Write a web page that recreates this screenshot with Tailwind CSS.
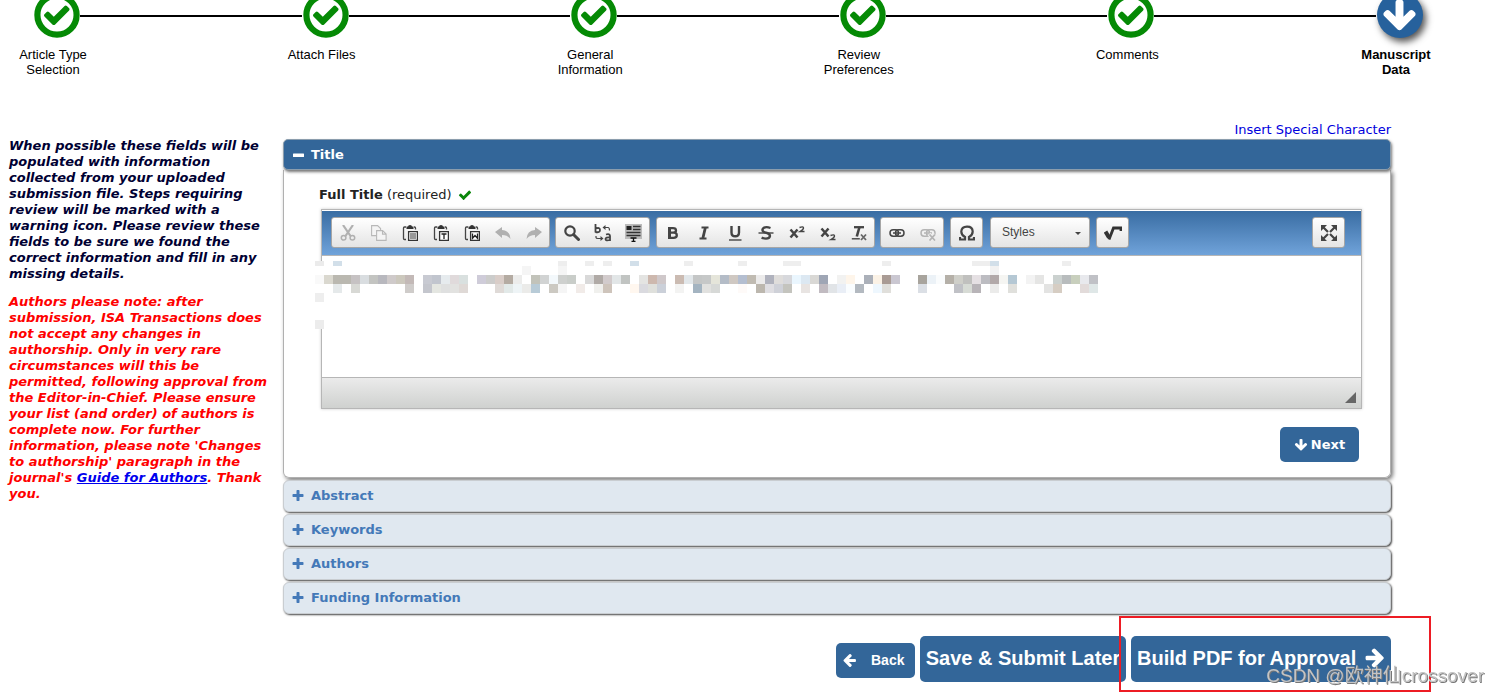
<!DOCTYPE html>
<html lang="en">
<head>
<meta charset="utf-8">
<title>Manuscript Data</title>
<script src="https://cdn.jsdelivr.net/npm/@tailwindcss/browser@4"></script>
</head>
<body class="bg-white text-black flow-root min-h-screen font-['Verdana','DejaVu_Sans',sans-serif] text-[13px] leading-4">
<svg class="hidden" aria-hidden="true">
  <symbol id="check" viewBox="0 0 1792 1792"><path d="M1671 566q0 40-28 68l-724 724-136 136q-28 28-68 28t-68-28l-136-136-362-362q-28-28-28-68t28-68l136-136q28-28 68-28t68 28l294 295 656-657q28-28 68-28t68 28l136 136q28 28 28 68z"/></symbol>
  <symbol id="plus" viewBox="0 0 1792 1792"><path d="M1600 736v192q0 40-28 68t-68 28h-416v416q0 40-28 68t-68 28h-192q-40 0-68-28t-28-68v-416h-416q-40 0-68-28t-28-68v-192q0-40 28-68t68-28h416v-416q0-40 28-68t68-28h192q40 0 68 28t28 68v416h416q40 0 68 28t28 68z"/></symbol>
  <symbol id="arrow" viewBox="0 0 1792 1792"><path d="M1675 832q0 53-37 90l-651 652q-39 37-91 37-53 0-90-37l-651-652q-38-36-38-90 0-53 38-91l74-75q39-37 91-37 53 0 90 37l294 294v-704q0-52 38-90t90-38h128q52 0 90 38t38 90v704l294-294q37-37 90-37 52 0 91 37l75 75q37 39 37 91z"/></symbol>
  <symbol id="done" viewBox="0 0 46 46"><circle cx="23" cy="23" r="19.6" fill="#fff" stroke="#058a05" stroke-width="6.2"/><path transform="translate(8 8) scale(.0165)" fill="#058a05" d="M1671 566q0 40-28 68l-724 724-136 136q-28 28-68 28t-68-28l-136-136-362-362q-28-28-28-68t28-68l136-136q28-28 68-28t68 28l294 295 656-657q28-28 68-28t68 28l136 136q28 28 28 68z"/></symbol>
  <symbol id="clip" viewBox="0 0 16 16"><path d="M4 2H2.5Q1.5 2 1.5 3v10.500q0 1 1 1H4M12 2h.5q1 0 1 1v1.500" fill="none" stroke="#444" stroke-width="1.300"/><path d="M4.500 1.500h1.500Q6 0 8 0t2 1.500h1.500V4h-7z" fill="#333"/><path d="M6.600 6.600h8.800v8.800H6.600z" fill="#fff" stroke="#333" stroke-width="1.300"/></symbol>
  <symbol id="undo" viewBox="0 0 16 16"><path d="M0 7l7-5v3q8 .5 8.500 9-3-4-8.500-4v3z" fill="#b0b0b0"/></symbol>
  <symbol id="link" viewBox="0 0 16 16"><rect x="1" y="4.800" width="8.500" height="6.400" rx="3.200" fill="none" stroke="currentColor" stroke-width="1.500"/><rect x="6.500" y="4.800" width="8.500" height="6.400" rx="3.200" fill="none" stroke="currentColor" stroke-width="1.500"/><path d="M4 8h8" stroke="currentColor" stroke-width="1.500"/></symbol>
</svg>

<ol class="flex -mt-2 pl-[34px] pr-[76px] text-center font-['Liberation_Sans',Arial,sans-serif] leading-[15px]">
  <li class="flex-1"><div class="flex items-center"><svg class="size-[46px]"><use href="#done"/></svg><span class="h-[2px] flex-1 bg-black mr-px mt-[2px]"></span></div><p class="w-24 -ml-[29px] mt-[9px]">Article Type<br>Selection</p></li>
  <li class="flex-1"><div class="flex items-center"><svg class="size-[46px]"><use href="#done"/></svg><span class="h-[2px] flex-1 bg-black mr-px mt-[2px]"></span></div><p class="w-24 -ml-[29px] mt-[9px]">Attach Files</p></li>
  <li class="flex-1"><div class="flex items-center"><svg class="size-[46px]"><use href="#done"/></svg><span class="h-[2px] flex-1 bg-black mr-px mt-[2px]"></span></div><p class="w-24 -ml-[29px] mt-[9px]">General<br>Information</p></li>
  <li class="flex-1"><div class="flex items-center"><svg class="size-[46px]"><use href="#done"/></svg><span class="h-[2px] flex-1 bg-black mr-px mt-[2px]"></span></div><p class="w-24 -ml-[29px] mt-[9px]">Review<br>Preferences</p></li>
  <li class="flex-1"><div class="flex items-center"><svg class="size-[46px]"><use href="#done"/></svg><span class="h-[2px] flex-1 bg-black mr-px mt-[2px]"></span></div><p class="w-24 -ml-[29px] mt-[9px]">Comments</p></li>
  <li class="w-[46px]" aria-current="step"><div class="size-[46px] rounded-full bg-[#26619c] shadow-[3px_4px_7px_#555] flex items-center justify-center"><svg class="size-[37px] fill-white"><use href="#arrow"/></svg></div><p class="w-24 -ml-[29px] mt-[9px] font-bold">Manuscript<br>Data</p></li>
</ol>

<div class="flex mt-[45px]">
  <aside class="w-[283px] shrink-0 pl-[9px] pt-4 font-bold italic whitespace-nowrap">
    <p class="text-[#000033]">When possible these fields will be<br>populated with information<br>collected from your uploaded<br>submission file. Steps requiring<br>review will be marked with a<br>warning icon. Please review these<br>fields to be sure we found the<br>correct information and fill in any<br>missing details.</p>
    <p class="mt-3 text-[#ff0000]">Authors please note: after<br>submission, ISA Transactions does<br>not accept any changes in<br>authorship. Only in very rare<br>circumstances will this be<br>permitted, following approval from<br>the Editor-in-Chief. Please ensure<br>your list (and order) of authors is<br>complete now. For further<br>information, please note 'Changes<br>to authorship' paragraph in the<br>journal's <a href="#guide" class="text-[#0000ee] underline">Guide for Authors</a>. Thank<br>you.</p>
  </aside>

  <main class="flex-1 min-w-0 mr-[108px]">
    <div class="flex justify-end mb-px"><a href="#special" class="text-[#0000dd]">Insert Special Character</a></div>

    <section>
      <h2 class="relative"><button class="w-full h-[31px] flex items-center gap-[6px] pl-[9px] rounded-[5px] border border-[#8b9dad] bg-[#336699] text-white font-bold shadow-[1px_2px_3px_#777]"><svg class="w-3 h-3" viewBox="0 0 12 12"><rect y="4.500" width="11" height="3.500" rx="0.500" fill="#fff"/></svg>Title</button></h2>
      <div class="border border-[#b0b0b0] border-t-0 rounded-b-[6px] shadow-[2px_2px_4px_#777] pt-[17px] pb-[15px] pl-[35px] pr-7 text-[#222]">
        <div class="flex items-center gap-[6px]"><label for="full-title"><b>Full Title</b> (required)</label><svg class="size-[14px] fill-[#0a860a]"><use href="#check"/></svg></div>

        <div class="ml-[2px] mt-[6px] border border-[#b6b6b6] shadow-[0_0_3px_#0003] bg-white font-['Liberation_Sans',Arial,sans-serif]">
          <div class="mt-px flex items-start gap-x-[5px] h-[45px] pt-[6px] pl-[9px] pr-4 border-b border-[#b6b6b6] bg-linear-to-b from-[#396da3] to-[#70a3da]">
            <div class="flex h-[31px] rounded-[3px] border border-[#a6a6a6] bg-linear-to-b from-white to-[#e4e4e4]">
              <button aria-label="Cut" class="w-[31px] flex items-center justify-center"><svg class="size-4" viewBox="0 0 16 16" fill="none" stroke="#b0b0b0" stroke-width="1.500"><path d="M3 0l7.500 11M13 0L5.500 11" stroke-width="2.200"/><circle cx="3.600" cy="12.800" r="2.300"/><circle cx="12.400" cy="12.800" r="2.300"/></svg></button>
              <button aria-label="Copy" class="w-[31px] flex items-center justify-center"><svg class="size-4" viewBox="0 0 16 16" fill="#f4f4f4" stroke="#b8b8b8" stroke-width="1.100"><path d="M.6.600h6l3 3v7h-9z"/><path d="M5.600 5.600h6l3.500 3.500v6.300H5.600z"/><path d="M11.500 5.600v3.500H15" fill="none"/></svg></button>
              <button aria-label="Paste" class="w-[31px] flex items-center justify-center"><svg class="size-4" viewBox="0 0 16 16"><use href="#clip"/><path d="M8 9h6M8 11h6M8 13h6" stroke="#333"/></svg></button>
              <button aria-label="Paste as plain text" class="w-[31px] flex items-center justify-center"><svg class="size-4" viewBox="0 0 16 16"><use href="#clip"/><path d="M8.500 9h5M11 9v5" stroke="#222" stroke-width="1.300"/></svg></button>
              <button aria-label="Paste from Word" class="w-[31px] flex items-center justify-center"><svg class="size-4" viewBox="0 0 16 16"><use href="#clip"/><path d="M8.500 8.500v4.800L11 10.500l2.500 2.800V8.500" fill="none" stroke="#222" stroke-width="1.300"/></svg></button>
              <button aria-label="Undo" class="w-[31px] flex items-center justify-center"><svg class="size-4"><use href="#undo"/></svg></button>
              <button aria-label="Redo" class="w-[31px] flex items-center justify-center"><svg class="size-4 -scale-x-100"><use href="#undo"/></svg></button>
            </div>
            <div class="flex h-[31px] rounded-[3px] border border-[#a6a6a6] bg-linear-to-b from-white to-[#e4e4e4]">
              <button aria-label="Find" class="w-[31px] flex items-center justify-center"><svg class="size-4" viewBox="0 0 16 16" fill="none" stroke="#444"><circle cx="6" cy="6" r="4.700" stroke-width="2.200"/><path d="M9.500 9.500l5 5" stroke-width="3" stroke-linecap="round"/></svg></button>
              <button aria-label="Replace" class="w-[31px] flex items-center justify-center"><svg class="w-[18px] h-[18px]" viewBox="0 0 18 18" fill="none" stroke="#444" stroke-width="1.800"><path d="M1.500 0v8.500M1.500 4.500Q6 3 6 6T1.500 8M12 10.500q4-1 4 1.500v5M16 13.500q-4.500-.5-4.500 1.600T16 16"/><path d="M10 3.500h4q1.500 0 1.500 3M2 12v1.500q0 1 2 1h3" stroke-width="1.200"/><path d="M11.500 1L8.500 3.500l3 2.500zM6.500 12l3 2.500-3 2.500z" fill="#444" stroke="none"/></svg></button>
              <button aria-label="Select all" class="w-[31px] flex items-center justify-center"><svg class="w-[17px] h-[18px]" viewBox="0 0 17 18"><path d="M0 0h17v15H0z" fill="#bbb"/><path d="M1.500 2h5v4h-5z" fill="#222"/><path d="M8 2.500h7.500M8 5.500h7.500M1.500 8.500h14M1.500 11.500h14" stroke="#333" stroke-width="1.400"/><path d="M5.500 14h6M8.500 14v3.500M6.500 17.500h4" stroke="#111" stroke-width="1.300"/></svg></button>
            </div>
            <div class="flex h-[31px] ml-px rounded-[3px] border border-[#a6a6a6] bg-linear-to-b from-white to-[#e4e4e4]">
              <button aria-label="Bold" class="w-[31px] flex items-center justify-center"><svg class="size-4" viewBox="0 0 16 16" fill="none" stroke="#444"><path d="M4.500 3.200H8q3 0 3 2.200t-3 2.200H4.500zM4.500 7.600H8.500q3.300 0 3.300 2.600t-3.300 2.600h-4z" stroke-width="2.300"/><path d="M4.500 2v12" stroke-width="3"/></svg></button>
              <button aria-label="Italic" class="w-[31px] flex items-center justify-center"><svg class="size-4" viewBox="0 0 16 16" fill="none" stroke="#444"><path d="M5.500 2.500h7M3.500 13.500h7" stroke-width="1.900"/><path d="M9.400 2.500L6.800 13.500" stroke-width="2.800"/></svg></button>
              <button aria-label="Underline" class="w-[31px] flex items-center justify-center"><svg class="size-4" viewBox="0 0 16 16" fill="none" stroke="#444"><path d="M4.500 1v6.500q0 3.800 3.700 3.800T12 7.500V1" stroke-width="2.400"/><path d="M2 15h12.500" stroke-width="1.400"/></svg></button>
              <button aria-label="Strikethrough" class="w-[31px] flex items-center justify-center"><svg class="size-4" viewBox="0 0 16 16" fill="none" stroke="#444"><path d="M12.500 3Q8.500 1.500 6 2.700 3.600 4.200 5 6.400 6 7.300 9 8q3.200 1 2.900 3.300-.5 2.300-3.900 2.300-2.200 0-4.400-1" stroke-width="2.400"/><path d="M.5 8h15" stroke-width="1.400"/></svg></button>
              <button aria-label="Superscript" class="w-[31px] flex items-center justify-center"><svg class="size-4" viewBox="0 0 16 16" fill="none" stroke="#444"><path d="M1.500 4.500l7 8M8.500 4.500l-7 8" stroke-width="2.500"/><path d="M10.500 2.500q4-1.500 4 .5 0 1.500-3.500 3.500h4.500" stroke-width="1.400"/></svg></button>
              <button aria-label="Subscript" class="w-[31px] flex items-center justify-center"><svg class="size-4" viewBox="0 0 16 16" fill="none" stroke="#444"><path d="M1.500 3.500l7 8M8.500 3.500l-7 8" stroke-width="2.500"/><path d="M10.500 10.500q4-1.500 4 .5 0 1.500-3.500 3.500h4.500" stroke-width="1.400"/></svg></button>
              <button aria-label="Remove format" class="w-[31px] flex items-center justify-center"><svg class="size-4" viewBox="0 0 16 16" fill="none" stroke="#444"><path d="M3 2.200h10" stroke-width="2.300"/><path d="M8.500 2L5.800 11.500" stroke-width="2.600"/><path d="M.8 13.800h8" stroke-width="1.400"/><path d="M10 9.500l5 5.500M15 9.500L10 15" stroke="#666" stroke-width="1.800"/></svg></button>
            </div>
            <div class="flex h-[31px] rounded-[3px] border border-[#a6a6a6] bg-linear-to-b from-white to-[#e4e4e4]">
              <button aria-label="Link" class="w-[31px] flex items-center justify-center text-[#444]"><svg class="size-4"><use href="#link"/></svg></button>
              <button aria-label="Unlink" class="w-[31px] flex items-center justify-center text-[#b4b4b4]"><svg class="size-4" viewBox="0 0 16 16"><use href="#link"/><path d="M9 9l6 6.500M15 9L9 15.500" stroke="#eee" stroke-width="4"/><path d="M9.500 9.500l5.500 6M15 9.500l-5.500 6" stroke="currentColor" stroke-width="1.800"/></svg></button>
            </div>
            <button aria-label="Insert special symbol" class="w-[33px] h-[31px] ml-px flex items-center justify-center rounded-[3px] border border-[#a6a6a6] bg-linear-to-b from-white to-[#e4e4e4]"><svg class="size-4" viewBox="0 0 16 16" fill="none" stroke="#444" stroke-width="2.200"><path d="M1 12v2.500h5V12Q2.300 10 2.300 6.500 2.500 1.700 8 1.600t5.700 4.900Q13.700 10 10 12v2.500h5V12"/></svg></button>
            <div class="relative w-[100px] h-[31px] ml-[2px] rounded-[3px] border border-[#a6a6a6] bg-linear-to-b from-white to-[#e4e4e4]">
              <select aria-label="Styles" class="appearance-none block w-full h-full pl-[11px] pb-[2px] text-xs text-[#444] font-['Liberation_Sans',Arial,sans-serif]"><option>Styles</option></select>
              <svg class="absolute right-2 top-[14px] w-[6px] h-[3px] pointer-events-none" viewBox="0 0 6 3"><path d="M0 0h6L3 3z" fill="#444"/></svg>
            </div>
            <button aria-label="Math equation" class="w-[33px] h-[31px] ml-px flex items-center justify-center rounded-[3px] border border-[#a6a6a6] bg-linear-to-b from-white to-[#e4e4e4]"><svg class="w-[18px] h-[18px]" viewBox="0 0 18 18" fill="none" stroke="#333"><path d="M1.500 7.500L5 13.500" stroke-width="4"/><path d="M5 15.500L9.500 4H17v3" stroke-width="2.800"/></svg></button>
            <button aria-label="Maximize" class="ml-auto w-[33px] h-[31px] flex items-center justify-center rounded-[3px] border border-[#a6a6a6] bg-linear-to-b from-white to-[#e4e4e4]"><svg class="size-4" viewBox="0 0 16 16" fill="#444" stroke="#444"><path d="M0 0h6L0 6zM16 0v6l-6-6zM0 16v-6l6 6zM16 16h-6l6-6z" stroke="none"/><path d="M2 2l5 5M14 2L9 7M2 14l5-5M14 14L9 9" stroke-width="2.200"/></svg></button>
          </div>
          <div class="relative">
            <textarea id="full-title" class="block w-full h-[121px] resize-none outline-none p-5"></textarea>
            <svg id="mosaic" class="absolute -left-[7px] top-[5px] w-[783px] h-[68px] pointer-events-none" viewBox="0 0 783 68" shape-rendering="crispEdges"><rect width="20" height="69" fill="#fff"/></svg>
          </div>
          <div class="h-[31px] flex items-end justify-end pr-[5px] pb-[5px] border-t border-[#b6b6b6] bg-linear-to-b from-[#ebebeb] to-[#cfd1cf]"><svg class="size-[11px]" viewBox="0 0 11 11"><path d="M11 0v11H0z" fill="#666"/></svg></div>
        </div>

        <div class="flex justify-end mt-[18px] mr-[3px]"><button class="w-[79px] h-[35px] flex items-center justify-center gap-[3px] rounded-[5px] bg-[#336699] text-white font-bold"><svg class="size-[14px] fill-white"><use href="#arrow"/></svg>Next</button></div>
      </div>
    </section>

    <div class="mt-[2px] flex flex-col gap-[2px] font-bold text-[#4479b8]">
      <button class="h-8 flex items-center gap-[6px] pl-[7px] rounded-[6px] border border-[#c9cdd1] bg-[#e0e8f0] shadow-[1px_1px_2px_#444]"><svg class="size-[14px] fill-current"><use href="#plus"/></svg>Abstract</button>
      <button class="h-8 flex items-center gap-[6px] pl-[7px] rounded-[6px] border border-[#c9cdd1] bg-[#e0e8f0] shadow-[1px_1px_2px_#444]"><svg class="size-[14px] fill-current"><use href="#plus"/></svg>Keywords</button>
      <button class="h-8 flex items-center gap-[6px] pl-[7px] rounded-[6px] border border-[#c9cdd1] bg-[#e0e8f0] shadow-[1px_1px_2px_#444]"><svg class="size-[14px] fill-current"><use href="#plus"/></svg>Authors</button>
      <button class="h-8 flex items-center gap-[6px] pl-[7px] rounded-[6px] border border-[#c9cdd1] bg-[#e0e8f0] shadow-[1px_1px_2px_#444]"><svg class="size-[14px] fill-current"><use href="#plus"/></svg>Funding Information</button>
    </div>

    <div class="mt-[22px] flex justify-end items-center gap-[5px] font-['Liberation_Sans',Arial,sans-serif] font-bold text-white whitespace-nowrap">
      <button class="w-[79px] h-[35px] mt-[2px] flex items-center gap-[14px] pl-[6px] rounded-[5px] bg-[#336699] text-sm"><svg class="size-[15px] fill-white rotate-90"><use href="#arrow"/></svg>Back</button>
      <button class="w-[206px] h-[46px] pb-[2px] rounded-[5px] bg-[#336699] text-xl">Save &amp; Submit Later</button>
      <div class="relative">
        <button class="w-[260px] h-[46px] pb-[2px] flex items-center gap-2 pl-[6px] rounded-[5px] bg-[#336699] text-xl">Build PDF for Approval<svg class="size-[22px] fill-white -rotate-90"><use href="#arrow"/></svg></button>
        <div class="absolute -left-3 -right-10 -top-5 -bottom-[10px] border-2 border-[#ed1c24] pointer-events-none"></div>
      </div>
    </div>
  </main>
</div>

<p class="fixed right-[15px] bottom-[7px] text-[19px] leading-6 text-[#c4c4c4] [text-shadow:1px_1px_0_#777] whitespace-nowrap font-['Liberation_Sans','Noto_Sans_CJK_SC',sans-serif]">CSDN @欧神仙crossover</p>

<script>
// Pixelated title: [top, height, "column:colour ..."], columns are 9px wide.
const rows = [
  [0, 5, "0:ebebeb 2:d2dfe9 27:eeeeee 30:eeeeee 32:eeeeee 35:d2dfe9 41:eeeeee 47:eeeeee 52:eeeeee 53:eeeeee 63:eeeeee 73:eeeeee 74:eeeeee 75:d2dfe9 83:eeeeee"],
  [5, 9, "23:f5f5f5 27:f5f5f5 75:f2f2f2"],
  [14, 9, "0:f9f9f9 1:dad8cf 2:bab8b0 3:bab8b0 4:c6c2c3 5:d9dde0 6:c3c4c1 7:b8b8be 8:cfcaca 9:ccc8bd 10:c3b9b7 12:c8cad2 13:c1c5ce 14:e6ebee 15:e0dadb 16:d9e0df 18:cfccd9 19:cccccb 20:d9cdc8 21:b4aba2 22:ececeb 24:c2c3ba 25:d1d3d3 26:f3f8fb 27:ced0ce 28:c9cdc9 30:d9d9d9 31:b0aaa6 32:d2cbcc 33:e2e6e7 34:c1c4c2 36:e4e4e2 37:cdb8ae 38:cfc8ca 40:cbbbb2 41:e2e7ea 42:c4c6c6 43:c6c8c8 44:e5e5da 45:b4bcc7 46:cfc8c2 47:b4bed0 48:c0bbb2 49:ecebeb 50:b0b2bd 51:dfdddb 52:d7d8dc 53:eaf6fe 54:dce8f2 55:d9d8d5 56:9fa6b5 58:f2f2f1 59:fef5ea 61:abb0b9 62:fbf2e6 63:a99b94 64:cac7d1 67:a8a49d 68:ecf2f7 69:fafcfd 70:b5b0a8 71:cfcfc9 72:c0c0be 73:e5e0e3 74:bcbcc1 75:b2a9a9 76:f5f5f2 77:b5c8d4 79:f3f3f3 80:e5e5e4 82:cbd1cf 83:b8bcbd 84:c8cfbd 85:e8e9ed 86:c0c1c6"],
  [23, 9, "2:e5e9ea 4:d8d9d5 10:cfccca 12:c4c6cd 13:e4e6e1 14:dfe0e0 15:e2e2e0 16:dfd9d6 20:dfdad7 21:e2e9e8 22:eef4f6 23:ebebe9 24:b8cbd7 26:ccc9c2 27:f5f5f5 29:f1ebe8 31:f0f0ed 32:cec4bb 35:fff7ef 36:dadadf 37:dfe0dc 38:cbd0d9 40:f3f3f2 42:a4b4c1 43:e1e1df 44:d7d9d7 47:fefaf8 49:bcb7ae 50:dfdee2 51:cfd1d8 52:c4c4be 54:e8e4e2 56:c1bbc1 57:e1e4e7 58:e9eef6 59:fafdff 60:b3b9c0 62:eef7fe 63:e0dfdb 67:dbdfe5 71:c0c1c6 72:d7dbd5 73:b8b4b8 75:ebebea 77:e0e0dc 81:e3e3e2 82:d6cdc3 85:e2dbda 86:dfe7e7"],
  [32, 9, "0:eeeeee"],
  [59, 9, "0:ececec"],
];
const mosaic = document.getElementById("mosaic");
for (const [y, h, cells] of rows) {
  for (const cell of cells.split(" ")) {
    const [col, colour] = cell.split(":");
    const r = document.createElementNS("http://www.w3.org/2000/svg", "rect");
    r.setAttribute("x", col * 9);
    r.setAttribute("y", y);
    r.setAttribute("width", 9);
    r.setAttribute("height", h);
    r.setAttribute("fill", "#" + colour);
    mosaic.appendChild(r);
  }
}
</script>
</body>
</html>
